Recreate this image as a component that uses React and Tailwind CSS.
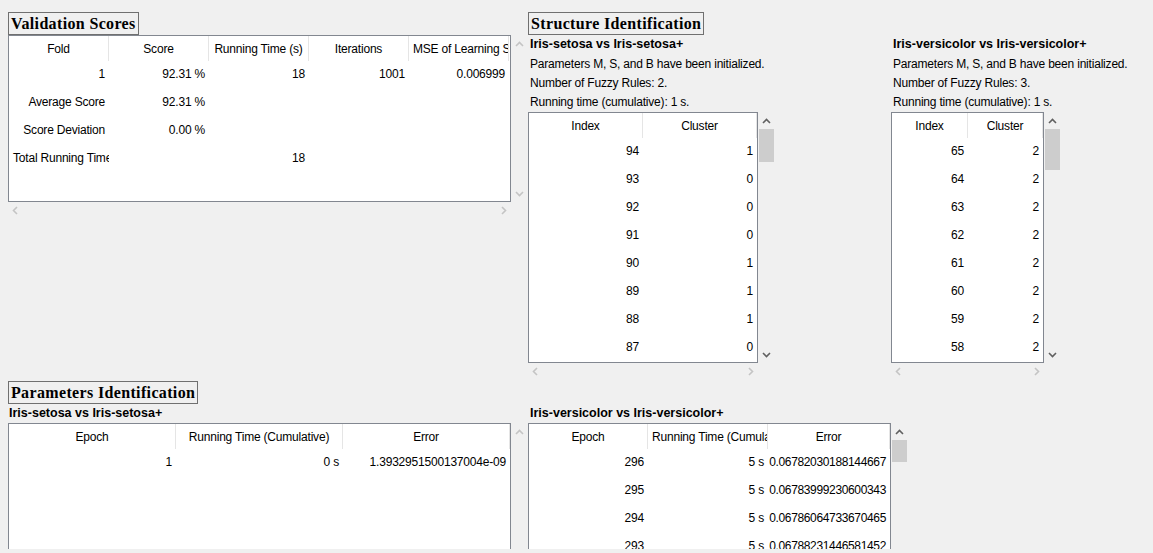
import React from "react";

const ui = "font-['Segoe_UI','Liberation_Sans',sans-serif] text-[12px] tracking-[-0.2px]";

const Up = ({ on }) => (
  <svg width="9" height="6" viewBox="0 0 9 6">
    <polyline points="1,5 4.5,1.5 8,5" fill="none" stroke={on ? "#606060" : "#c4c4c4"} strokeWidth="1.6" />
  </svg>
);
const Down = ({ on }) => (
  <svg width="9" height="6" viewBox="0 0 9 6">
    <polyline points="1,1 4.5,4.5 8,1" fill="none" stroke={on ? "#606060" : "#c4c4c4"} strokeWidth="1.6" />
  </svg>
);
const Left = () => (
  <svg width="6" height="9" viewBox="0 0 6 9">
    <polyline points="5,1 1.5,4.5 5,8" fill="none" stroke="#c4c4c4" strokeWidth="1.6" />
  </svg>
);
const Right = () => (
  <svg width="6" height="9" viewBox="0 0 6 9">
    <polyline points="1,1 4.5,4.5 1,8" fill="none" stroke="#c4c4c4" strokeWidth="1.6" />
  </svg>
);

const GroupLabel = ({ children }) => (
  <div className="w-fit h-[23px] flex items-center border border-[#707070] px-[2px] font-['Liberation_Serif','Times_New_Roman',serif] font-bold text-[16px] tracking-[0.35px] leading-none">
    {children}
  </div>
);

const VScroll = ({ on, thumb, h }) => (
  <div className={`w-[17px] ${h} flex flex-col items-center`}>
    <div className="h-[17px] flex items-center justify-center">
      <Up on={on} />
    </div>
    {thumb && <div className={`w-[15px] ${thumb} bg-[#cdcdcd]`} />}
    <div className="flex-1" />
    <div className="h-[17px] flex items-center justify-center">
      <Down on={on} />
    </div>
  </div>
);

const HScroll = ({ w }) => (
  <div className={`${w} h-[17px] flex items-center justify-between px-[4px]`}>
    <Left />
    <Right />
  </div>
);

// cols: [{ w, title, clip }]; rows: arrays of strings or { t } for left-clipped text
const Grid = ({ box, cols, rows }) => (
  <div className={`${box} border border-[#828790] bg-white overflow-hidden`}>
    <div className="flex h-[25px]">
      {cols.map((c, i) => (
        <div
          key={i}
          className={`${c.w} shrink-0 h-full border-r border-[#e5e5e5] flex items-center whitespace-nowrap overflow-hidden ${
            c.clip ? "justify-start pl-[4px]" : "justify-center"
          }`}
        >
          {c.title}
        </div>
      ))}
    </div>
    {rows.map((r, ri) => (
      <div key={ri} className="flex h-[28px]">
        {r.map((cell, ci) => {
          const clip = typeof cell === "object";
          return (
            <div
              key={ci}
              className={`${cols[ci].w} shrink-0 h-full leading-[26px] whitespace-nowrap overflow-hidden ${
                clip ? "text-left pl-[4px]" : "text-right pr-[4px]"
              } ${cols[ci].small ? "tracking-[-0.35px]" : ""}`}
            >
              {clip ? cell.t : cell}
            </div>
          );
        })}
      </div>
    ))}
  </div>
);

const StructInfo = ({ title, rules }) => (
  <div className="flex flex-col pl-[2px]">
    <div className="h-[19px] flex items-center font-bold text-[12.5px] tracking-normal">{title}</div>
    <div className="h-[19px] flex items-center">Parameters M, S, and B have been initialized.</div>
    <div className="h-[19px] flex items-center">Number of Fuzzy Rules: {rules}.</div>
    <div className="h-[19px] flex items-center">Running time (cumulative): 1 s.</div>
  </div>
);

export default function App() {
  const valCols = [
    { w: "w-[100px]", title: "Fold" },
    { w: "w-[100px]", title: "Score" },
    { w: "w-[100px]", title: "Running Time (s)" },
    { w: "w-[100px]", title: "Iterations" },
    { w: "w-[100px]", title: "MSE of Learning Set", clip: true },
  ];
  const valRows = [
    ["1", "92.31 %", "18", "1001", "0.006999"],
    ["Average Score", "92.31 %", "", "", ""],
    ["Score Deviation", "0.00 %", "", "", ""],
    [{ t: "Total Running Time" }, "", "18", "", ""],
  ];

  const s1Cols = [
    { w: "w-[114px]", title: "Index" },
    { w: "w-[114px]", title: "Cluster" },
  ];
  const s1Rows = [
    ["94", "1"], ["93", "0"], ["92", "0"], ["91", "0"],
    ["90", "1"], ["89", "1"], ["88", "1"], ["87", "0"],
  ];
  const s2Cols = [
    { w: "w-[76px]", title: "Index" },
    { w: "w-[75px]", title: "Cluster" },
  ];
  const s2Rows = ["65", "64", "63", "62", "61", "60", "59", "58"].map((n) => [n, "2"]);

  const p1Cols = [
    { w: "w-[167px]", title: "Epoch" },
    { w: "w-[167px]", title: "Running Time (Cumulative)" },
    { w: "w-[167px]", title: "Error" },
  ];
  const p1Rows = [["1", "0 s", "1.3932951500137004e-09"]];
  const p2Cols = [
    { w: "w-[119px]", title: "Epoch" },
    { w: "w-[120px]", title: "Running Time (Cumulative)", clip: true },
    { w: "w-[122px]", title: "Error", small: true },
  ];
  const p2Rows = [
    ["296", "5 s", "0.06782030188144667"],
    ["295", "5 s", "0.06783999230600343"],
    ["294", "5 s", "0.06786064733670465"],
    ["293", "5 s", "0.06788231446581452"],
    ["292", "5 s", "0.06790506069088127"],
  ];

  return (
    <div className={`w-[1153px] h-[553px] bg-[#f0f0f0] text-black overflow-hidden ${ui}`}>
      <div className="h-[549px] overflow-hidden pl-[8px] pt-[12px]">
        <div className="flex h-[369px]">
          {/* Validation Scores */}
          <div className="w-[520px] shrink-0 flex flex-col">
            <GroupLabel>Validation Scores</GroupLabel>
            <div className="flex">
              <Grid box="w-[503px] h-[167px]" cols={valCols} rows={valRows} />
              <VScroll h="h-[167px]" on={false} />
            </div>
            <HScroll w="w-[503px]" />
          </div>

          {/* Structure Identification */}
          <div className="w-[363px] shrink-0 flex flex-col">
            <GroupLabel>Structure Identification</GroupLabel>
            <StructInfo title="Iris-setosa vs Iris-setosa+" rules={2} />
            <div className="flex mt-[1px]">
              <Grid box="w-[230px] h-[251px]" cols={s1Cols} rows={s1Rows} />
              <VScroll h="h-[251px]" on thumb="h-[33px]" />
            </div>
            <HScroll w="w-[230px]" />
          </div>

          <div className="shrink-0 flex flex-col pt-[23px]">
            <StructInfo title="Iris-versicolor vs Iris-versicolor+" rules={3} />
            <div className="flex mt-[1px]">
              <Grid box="w-[153px] h-[251px]" cols={s2Cols} rows={s2Rows} />
              <VScroll h="h-[251px]" on thumb="h-[41px]" />
            </div>
            <HScroll w="w-[153px]" />
          </div>
        </div>

        {/* Parameters Identification */}
        <GroupLabel>Parameters Identification</GroupLabel>
        <div className="flex">
          <div className="w-[520px] shrink-0 flex flex-col">
            <div className="h-[19px] flex items-center pl-[1px] font-bold text-[12.5px] tracking-normal">
              Iris-setosa vs Iris-setosa+
            </div>
            <div className="flex">
              <Grid box="w-[503px] h-[200px]" cols={p1Cols} rows={p1Rows} />
              <VScroll h="h-[200px]" on={false} />
            </div>
          </div>
          <div className="shrink-0 flex flex-col">
            <div className="h-[19px] flex items-end pl-[2px] font-bold text-[12.5px] tracking-normal">
              Iris-versicolor vs Iris-versicolor+
            </div>
            <div className="flex">
              <Grid box="w-[363px] h-[200px]" cols={p2Cols} rows={p2Rows} />
              <VScroll h="h-[200px]" on thumb="h-[22px]" />
            </div>
          </div>
        </div>
      </div>
    </div>
  );
}
